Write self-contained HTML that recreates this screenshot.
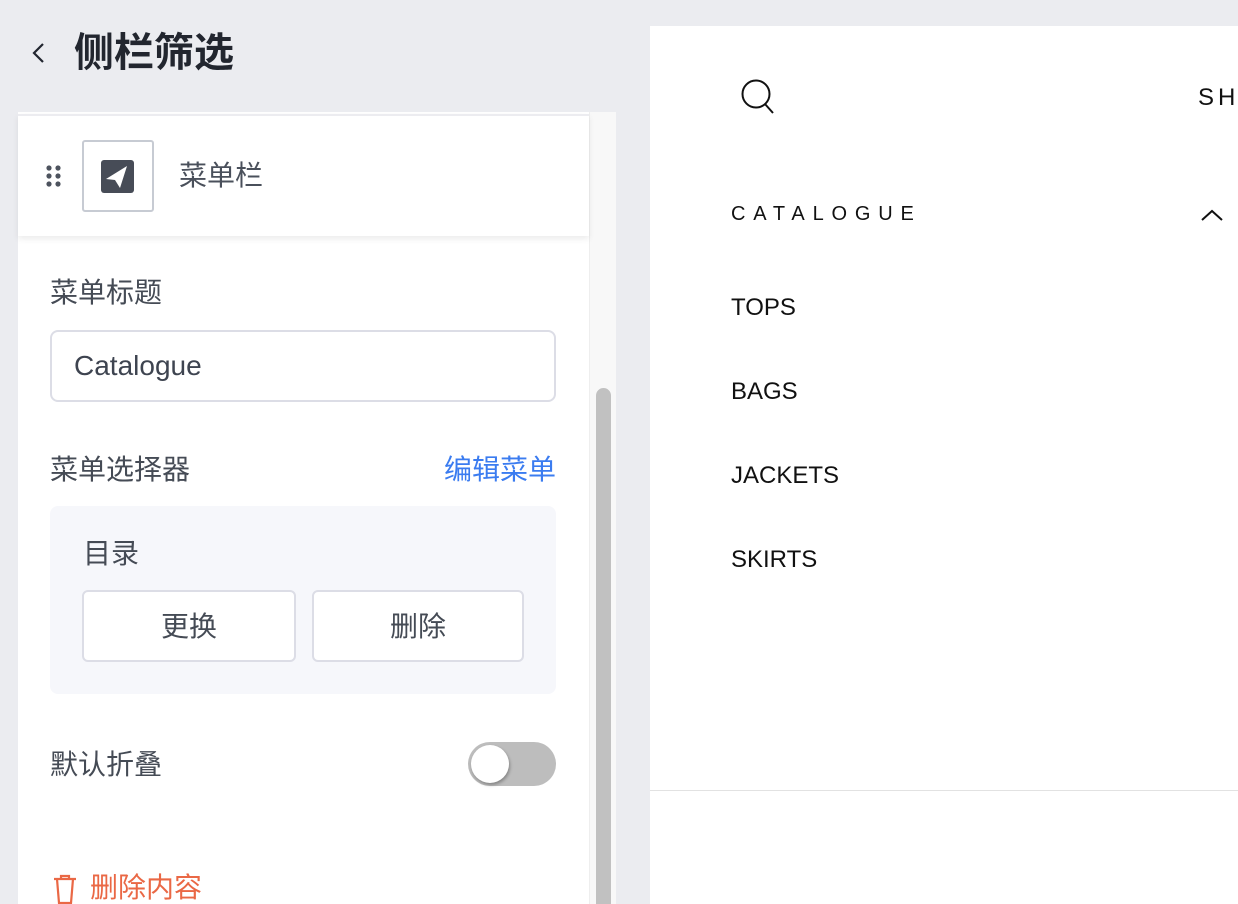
<!DOCTYPE html>
<html><head><meta charset="utf-8"><style>
*{box-sizing:border-box;margin:0;padding:0}
html,body{width:1238px;height:904px;overflow:hidden}
body{background:#ebecf0;font-family:"Liberation Sans","Noto Sans CJK SC",sans-serif;position:relative;color:#454b55}
.a{position:absolute}
.t{font-size:28px;line-height:1}
</style></head><body>
<svg class="a" style="left:30px;top:42px" width="16" height="22" viewBox="0 0 16 22"><path d="M13 2 L4 11 L13 20" fill="none" stroke="#222630" stroke-width="2.2"/></svg>
<div class="a" style="left:74px;top:31px;font-size:40px;font-weight:bold;color:#22262f;line-height:44px">侧栏筛选</div>

<div class="a" style="left:18px;top:112px;width:571px;height:792px;background:#fff"></div>
<div class="a" style="left:589px;top:112px;width:27px;height:792px;background:#f8f8f8;border-left:1px solid #eee"></div>
<div class="a" style="left:596px;top:388px;width:15px;height:516px;background:#c1c1c1;border-radius:8px 8px 0 0"></div>

<div class="a" style="left:18px;top:114px;width:571px;height:122px;background:#fff;box-shadow:0 3px 6px rgba(0,0,0,0.08);border-top:2px solid #ececf0"></div>
<svg class="a" style="left:45px;top:164px" width="18" height="26"><g fill="#4d535e"><circle cx="4" cy="4" r="2.6"/><circle cx="13" cy="4" r="2.6"/><circle cx="4" cy="12" r="2.6"/><circle cx="13" cy="12" r="2.6"/><circle cx="4" cy="20" r="2.6"/><circle cx="13" cy="20" r="2.6"/></g></svg>
<div class="a" style="left:82px;top:140px;width:72px;height:72px;border:2px solid #c7cbd3;border-radius:3px"></div>
<div class="a" style="left:101px;top:160px;width:33px;height:33px;background:#474c57;border-radius:3px"></div>
<svg class="a" style="left:101px;top:160px" width="33" height="33"><path d="M26 6 L5 19 L14 20 L19 28 Z" fill="#fff"/></svg>
<div class="a t" style="left:179px;top:162px;color:#4a505b">菜单栏</div>

<div class="a t" style="left:50px;top:279px">菜单标题</div>
<div class="a" style="left:50px;top:330px;width:506px;height:72px;border:2px solid #dcdde6;border-radius:8px"></div>
<div class="a" style="left:74px;top:350px;font-size:28px;color:#3e4450">Catalogue</div>
<div class="a t" style="left:50px;top:456px">菜单选择器</div>
<div class="a t" style="left:444px;top:456px;color:#3b7cf0">编辑菜单</div>
<div class="a" style="left:50px;top:506px;width:506px;height:188px;background:#f6f7fb;border-radius:8px"></div>
<div class="a t" style="left:83px;top:540px">目录</div>
<div class="a" style="left:82px;top:590px;width:214px;height:72px;background:#fff;border:2px solid #dcdde6;border-radius:6px;text-align:center;line-height:70px;font-size:28px">更换</div>
<div class="a" style="left:312px;top:590px;width:212px;height:72px;background:#fff;border:2px solid #dcdde6;border-radius:6px;text-align:center;line-height:70px;font-size:28px">删除</div>
<div class="a t" style="left:50px;top:751px">默认折叠</div>
<div class="a" style="left:468px;top:742px;width:88px;height:44px;background:#bdbdbd;border-radius:22px"></div>
<div class="a" style="left:471px;top:745px;width:38px;height:38px;background:#fff;border-radius:50%;box-shadow:1px 2px 3px rgba(0,0,0,0.3)"></div>
<svg class="a" style="left:52px;top:874px" width="26" height="30"><path d="M2 5 H24 M9 5 V2 H17 V5 M5 5 L7 29 H19 L21 5" fill="none" stroke="#ea6845" stroke-width="2.2"/></svg>
<div class="a t" style="left:90px;top:874px;color:#ea6845">删除内容</div>

<div class="a" style="left:650px;top:26px;width:588px;height:878px;background:#fff"></div>
<div class="a" style="left:650px;top:790px;width:588px;height:1px;background:#e2e2e2"></div>
<svg class="a" style="left:738px;top:76px" width="42" height="40"><circle cx="18" cy="18" r="13.5" fill="none" stroke="#111" stroke-width="2"/><path d="M27 28 L35 37" stroke="#111" stroke-width="2"/></svg>
<div class="a" style="left:1198px;top:84px;font-size:24px;letter-spacing:4px;color:#111">SH</div>
<div class="a" style="left:731px;top:203px;font-size:20px;letter-spacing:7.8px;color:#111">CATALOGUE</div>
<svg class="a" style="left:1200px;top:208px" width="24" height="14"><path d="M2 12 L12 3 L22 12" fill="none" stroke="#111" stroke-width="2"/></svg>
<div class="a" style="left:731px;top:294px;font-size:24px;color:#111">TOPS</div>
<div class="a" style="left:731px;top:378px;font-size:24px;color:#111">BAGS</div>
<div class="a" style="left:731px;top:462px;font-size:24px;color:#111">JACKETS</div>
<div class="a" style="left:731px;top:546px;font-size:24px;color:#111">SKIRTS</div>
</body></html>
